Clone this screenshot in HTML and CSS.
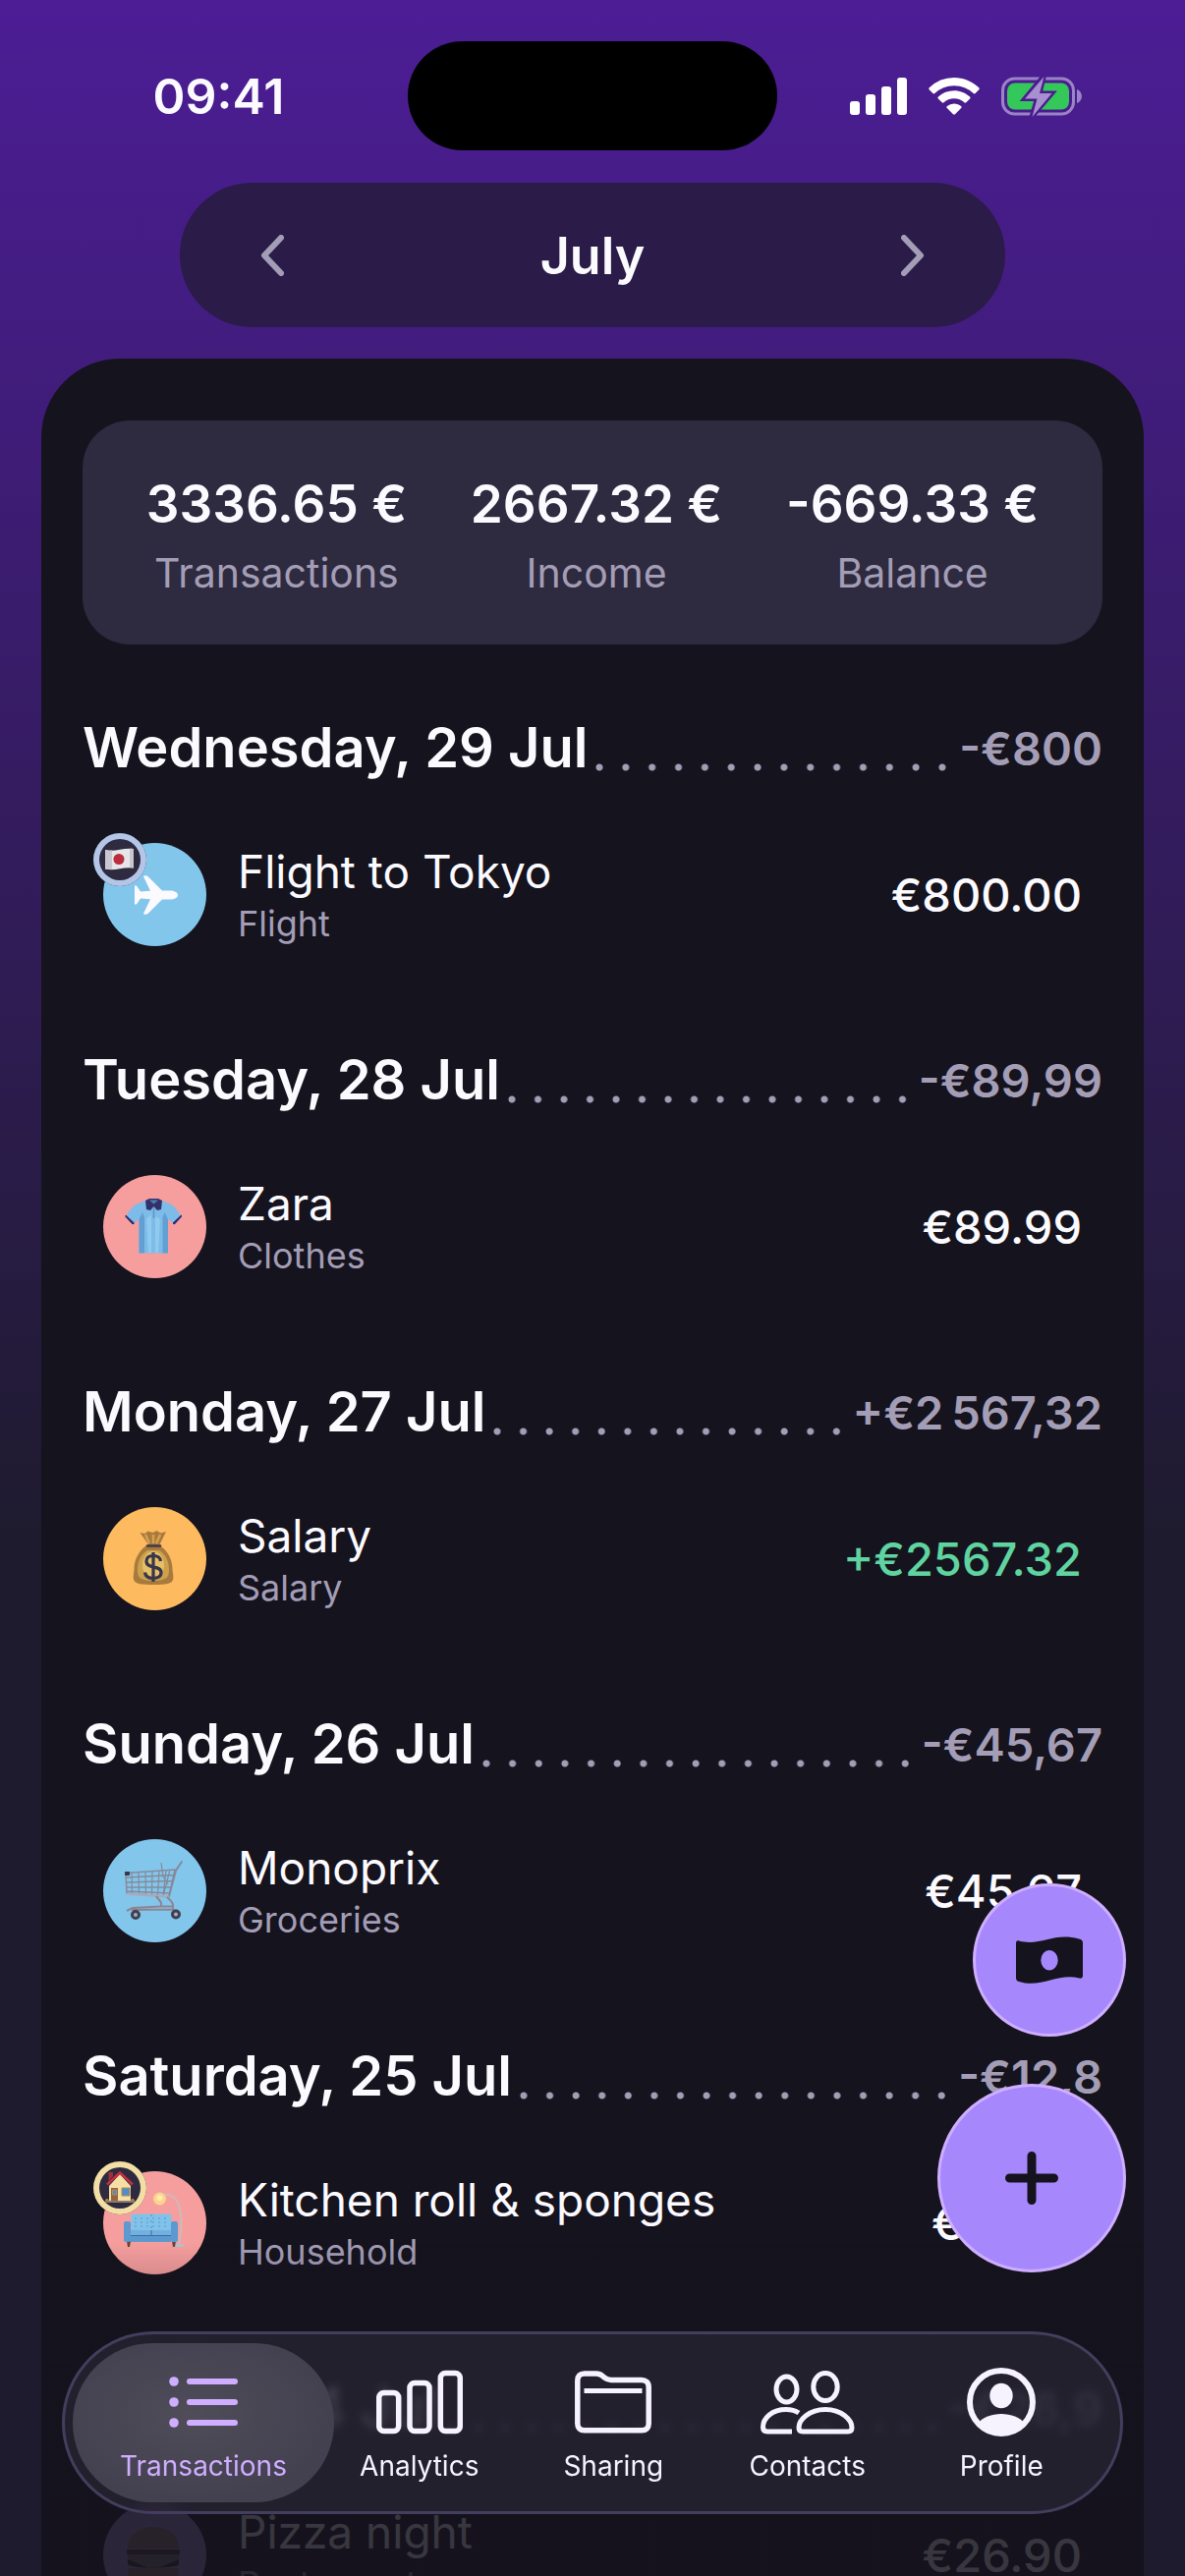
FILE: index.html
```html
<!DOCTYPE html>
<html lang="en">
<head>
    <meta charset="UTF-8">
    <meta name="viewport" content="width=device-width, initial-scale=1.0">
    <title>Transactions</title>
    <link rel="stylesheet" href="styles.css">
</head>
<body>
    <header class="status-bar">
        <span class="time">09:41</span>
        <span class="island"></span>
        <div class="status-icons">
            <svg width="58" height="38" viewBox="0 0 58 38" fill="#fff">
                <rect x="0" y="24" width="10" height="14" rx="3"/>
                <rect x="16" y="17" width="10" height="21" rx="3"/>
                <rect x="32" y="9" width="10" height="29" rx="3"/>
                <rect x="48" y="0" width="10" height="38" rx="3"/>
            </svg>
            <svg width="52" height="38" viewBox="0 0 52 38" fill="#fff">
                <path d="M26 0c9.500 0 18.500 3.700 25.300 10.300.6.600.6 1.400 0 2l-3.700 3.800c-.6.600-1.300.6-1.900 0A28 28 0 0 0 26 8.200 28 28 0 0 0 6.300 16.100c-.6.600-1.300.6-1.900 0L.7 12.300c-.6-.6-.6-1.400 0-2A36.200 36.200 0 0 1 26 0z"/>
                <path d="M26 13.200c6.200 0 11.800 2.400 16.100 6.300.6.600.6 1.400 0 2l-3.800 3.800c-.5.500-1.300.5-1.900 0A15.300 15.300 0 0 0 26 21.300c-4 0-7.600 1.500-10.400 4-.6.500-1.400.5-1.900 0l-3.800-3.800c-.6-.6-.6-1.400 0-2A23.600 23.600 0 0 1 26 13.200z"/>
                <path d="M26 26.400c2.700 0 5.100.9 7.100 2.500.7.600.7 1.400.1 2l-6.200 6.300c-.6.600-1.400.6-2 0l-6.200-6.300c-.6-.6-.6-1.400.1-2a11.300 11.300 0 0 1 7.100-2.500z"/>
            </svg>
            <svg width="82" height="42" viewBox="0 0 82 42">
                <rect x="1.500" y="3" width="72" height="36" rx="12" fill="none" stroke="#9a83c6" stroke-width="3"/>
                <rect x="6" y="7.500" width="63" height="27" rx="8" fill="#34c759"/>
                <path d="M77 14v14c3-1 5-4 5-7s-2-6-5-7z" fill="#9a83c6"/>
                <path d="M43.500 0 24 23.500h12.500L31 42l20.500-24H39z" fill="#a78fd0" stroke="#4a1b8d" stroke-width="5"/>
                <path d="M43.500 1 24 23.500h12.500L31.500 42 51.500 18H39z" fill="#a78fd0"/>
            </svg>
        </div>
    </header>

    <div class="month-picker">
        <button class="arrow" aria-label="Previous month">
            <svg width="24" height="42" viewBox="0 0 24 42"><path d="M21 3 4 21l17 18"/></svg>
        </button>
        <h1>July</h1>
        <button class="arrow" aria-label="Next month">
            <svg width="24" height="42" viewBox="0 0 24 42"><path d="m3 3 17 18L3 39"/></svg>
        </button>
    </div>

    <main class="panel">
        <div class="summary">
            <div class="summary-item"><strong>3336.65 €</strong><span>Transactions</span></div>
            <div class="summary-item"><strong>2667.32 €</strong><span>Income</span></div>
            <div class="summary-item"><strong>-669.33 €</strong><span>Balance</span></div>
        </div>

        <section class="day">
            <div class="day-header">
                <h2>Wednesday, 29 Jul</h2>
                <span class="dots"></span>
                <span class="total">-€800</span>
            </div>
            <div class="transaction">
                <div class="category blue">
                    <svg width="105" height="105" viewBox="0 0 105 105">
                        <path d="M76 53c0-3-4-4.500-8-4.500h-8L46 34.500c-1-1-2.500-1.500-4-1.300-.8.200-1 .8-.7 1.500l6.700 14-10 .8-3.700-5.500c-.5-.8-2.300-1-2.300 0V62c0 1 1.800.8 2.300 0l3.700-5.500 10 .8-6.700 14c-.3.700-.1 1.300.7 1.500 1.500.2 3-.3 4-1.300l14-14h8c4 0 8-1.500 8-4.500z" fill="#fbfaff"/>
                    </svg>
                    <span class="badge">
                        <svg width="54" height="54" viewBox="0 0 54 54">
                            <path d="M12 17c10 2.500 18-2.500 29-1v19.500c-11-1.500-19 3.500-29 1z" fill="#e6e5ea"/>
                            <path d="M12 17c3 .8 5 .8 7 .6v19c-2 .4-4 .4-7-.1zM37 15.700l4 .3v19.500l-4-.3z" fill="#c9c8d0"/>
                            <circle cx="26" cy="26.500" r="5.500" fill="#bb2c3d"/>
                        </svg>
                    </span>
                </div>
                <div class="details">
                    <span class="name">Flight to Tokyo</span>
                    <span class="type">Flight</span>
                </div>
                <span class="amount">€800.00</span>
            </div>
        </section>

        <section class="day">
            <div class="day-header">
                <h2>Tuesday, 28 Jul</h2>
                <span class="dots"></span>
                <span class="total">-€89,99</span>
            </div>
            <div class="transaction">
                <div class="category pink">
                    <svg width="105" height="105" viewBox="0 0 105 105">
                        <path d="M43 26 34 29.500c-4 2-7.500 7-10.500 12L31 49l5.500-4v34.500h29.500V45l5.500 4 7.500-7.500c-3-5-6.500-10-10.500-12L60 26l-8.500 5z" fill="#7dbbe8"/>
                        <path d="M36.500 45v34.500H42V43l-2-5zM66 45v34.500h-5.500V43l2-5z" fill="#639fd3"/>
                        <path d="m44 45 2 34h3V40zM58 45l-2 34h-3V42z" fill="#91caef"/>
                        <path d="m23 41 8.500 8-1.500 1-7-7.500zM79.500 41 71 49l1.500 1 7-7.500z" fill="#2d2c6e" stroke="#2d2c6e" stroke-width="1"/>
                        <path d="m43 26 4-2h9l4 2-1 9-4 1-3.500-4-3.500 4-4-1z" fill="#33316d"/>
                        <path d="M47 25.500h9l-4.500 4z" fill="#4e80a8"/>
                        <path d="M51.500 33v11" stroke="#5f97c7" stroke-width="1.500"/>
                    </svg>
                </div>
                <div class="details">
                    <span class="name">Zara</span>
                    <span class="type">Clothes</span>
                </div>
                <span class="amount">€89.99</span>
            </div>
        </section>

        <section class="day">
            <div class="day-header">
                <h2>Monday, 27 Jul</h2>
                <span class="dots"></span>
                <span class="total">+€2&#8239;567,32</span>
            </div>
            <div class="transaction">
                <div class="category orange">
                    <svg width="105" height="105" viewBox="0 0 105 105">
                        <path d="M46 38 37.500 26l5 1 3-2.500 5 1.500 4-2 4 2.500 5.500-1.500L57 39c9 5 13.500 15 13.500 24 0 3 1.500 8 .5 11-1 4-7 5-19.500 5S33 78.500 31 74c-.8-3 .5-8 .5-11C31.500 53 37 43 46 38z" fill="#a87a3d"/>
                        <path d="M45 44c-7 4-10 12-10 20 0 7 2 11 16 11s16-4 16-11c0-8-3-16-10-20z" fill="#cda04c"/>
                        <ellipse cx="51" cy="59" rx="11" ry="14" fill="#e5be66"/>
                        <path d="m43 28 4 9m4-9v9m7-9-4 9" stroke="#d5a24c" stroke-width="2.500"/>
                        <path d="M45 39.500h13" stroke="#40394a" stroke-width="2.500" stroke-linecap="round"/>
                        <path d="M58.500 55c-.5-4-3.500-5.500-7.500-5.500-4.500 0-7 2.300-7 5.800 0 8.200 15 3.500 15 11.200 0 4-3.500 6-8 6s-8-2-8.500-6M51 46v30" fill="none" stroke="#37364b" stroke-width="3.200"/>
                    </svg>
                </div>
                <div class="details">
                    <span class="name">Salary</span>
                    <span class="type">Salary</span>
                </div>
                <span class="amount income">+€2567.32</span>
            </div>
        </section>

        <section class="day">
            <div class="day-header">
                <h2>Sunday, 26 Jul</h2>
                <span class="dots"></span>
                <span class="total">-€45,67</span>
            </div>
            <div class="transaction">
                <div class="category blue">
                    <svg width="105" height="105" viewBox="0 0 105 105" fill="none" stroke="#858a9b">
                        <path d="M23 34.500 73 31l-6 27.500L24 55zM23.500 39l48-2.500M23.500 44l47-1.500M24 49h45M24 53l44 2" stroke-width="1.500"/>
                        <path d="m29 34 .5 21M36 33.500l.5 22M43 33l.5 23M50 32.500l-.5 24M57 32l-1.500 25M64 31.500 61 58M59 24l2 14 5 8M68 31l-7 27" stroke-width="1.200"/>
                        <path d="m67 58 7-26 6-9" stroke-width="2" stroke-linecap="round"/>
                        <path d="M24 55.500 67 58.500" stroke="#a7aab8" stroke-width="2.500"/>
                        <path d="M54 58c2 4 6 4 5 10M65 59c3 3 7 5 6 10M24 73l6-3 28-1.500h13v3L30 72l3 4M71 71l3 4" stroke="#8d8592" stroke-width="2"/>
                        <circle cx="33" cy="77" r="3.500" fill="#aab" stroke="#3d4053" stroke-width="3"/>
                        <circle cx="74" cy="76.500" r="3.500" fill="#aab" stroke="#3d4053" stroke-width="3"/>
                        <path d="M22.500 33.500h4v3h-4z" fill="#33384a" stroke="#33384a"/>
                    </svg>
                </div>
                <div class="details">
                    <span class="name">Monoprix</span>
                    <span class="type">Groceries</span>
                </div>
                <span class="amount">€45.67</span>
            </div>
        </section>

        <section class="day">
            <div class="day-header">
                <h2>Saturday, 25 Jul</h2>
                <span class="dots"></span>
                <span class="total">-€12,8</span>
            </div>
            <div class="transaction">
                <div class="category pink">
                    <svg width="105" height="105" viewBox="0 0 105 105">
                        <path d="M61 24c10-2 15 6 17 14 3 14 1 26-1 37" fill="none" stroke="#c9bdbb" stroke-width="1.800"/>
                        <path d="M73 75.500h8" stroke="#b9c0cc" stroke-width="3" stroke-linecap="round"/>
                        <circle cx="57.500" cy="28" r="6.500" fill="#fbd48b"/>
                        <circle cx="57.500" cy="27" r="3" fill="#fdeab5"/>
                        <path d="m24 71 1 6h2l1-6M70 71l1 6h2l1-6" fill="#5d473f"/>
                        <rect x="28.500" y="43.500" width="41" height="18" rx="2" fill="#80c2ea"/>
                        <path d="M49 44v17M32 48h35M32 52h35M32 56h35" stroke="#5c98c8" stroke-width="1.200" stroke-dasharray="2 4"/>
                        <rect x="26" y="60" width="46" height="6" fill="#74b0df"/>
                        <rect x="21" y="51" width="7" height="21" rx="2" fill="#5d99d1"/>
                        <rect x="69" y="51" width="7" height="21" rx="2" fill="#5d99d1"/>
                        <rect x="28" y="65.500" width="41" height="6.500" fill="#5d99d1"/>
                        <path d="M28 65.500h41M49 60v5" stroke="#386f9f"/>
                    </svg>
                    <span class="badge home">
                        <svg width="54" height="54" viewBox="0 0 54 54">
                            <path d="M16 25 27 13l11 12v16H16z" fill="#f6dfa4"/>
                            <path d="M15.500 11H20v4l-4.500 5z" fill="#9f2f3c"/>
                            <path d="m14 23.500 13-12 13 12" fill="none" stroke="#c4303f" stroke-width="2.500" stroke-linejoin="round"/>
                            <path d="M18 27h7v14h-7z" fill="#97663d"/>
                            <path d="M19.500 29h4v5h-4zM29 27h8v8h-8z" fill="#4f8fc8" stroke="#b98a50" stroke-width="1"/>
                            <path d="M12 41h30" stroke="#8d7b6b" stroke-width="2"/>
                            <path d="M12 40c1-3 3-3 4 0zM38 40c1-3 3-3 4 0z" fill="#b77f3c"/>
                        </svg>
                    </span>
                </div>
                <div class="details">
                    <span class="name">Kitchen roll &amp; sponges</span>
                    <span class="type">Household</span>
                </div>
                <span class="amount">€12.80</span>
            </div>
        </section>

        <section class="day">
            <div class="day-header">
                <h2>Friday, 24 Jul</h2>
                <span class="dots"></span>
                <span class="total">-€26,9</span>
            </div>
            <div class="transaction">
                <div class="category purple">
                    <svg width="105" height="105" viewBox="0 0 105 105">
                        <path d="M25 46c0-13 10-22 26-22s26 9 26 22z" fill="#8a7a6c"/>
                        <path d="M24 47h54v5H24z" fill="#3f3a38"/>
                        <path d="M25 52h52v5L51 68 25 57z" fill="#7c7470"/>
                        <path d="M25 57l26 11 26-11v5c-2 5-50 5-52 0z" fill="#332b2b"/>
                        <path d="M25 66h52c0 9-3 14-9 14H34c-6 0-9-5-9-14z" fill="#8a7a6c"/>
                    </svg>
                </div>
                <div class="details">
                    <span class="name">Pizza night</span>
                    <span class="type">Restaurant</span>
                </div>
                <span class="amount">€26.90</span>
            </div>
        </section>
    </main>

    <div class="fade"></div>

    <div class="actions">
        <button class="action small" aria-label="Budget">
            <svg width="68" height="48" viewBox="0 0 68 48">
                <path fill-rule="evenodd" d="M0 7c0-2 1-3 3-2.500 22 6 35-9 61-2 2.500.7 4 1.500 4 4V40c0 2-1.500 3-3.500 2.500C42 37 26 53 3 46c-2-.7-3-1.500-3-4zm34 7a8.500 10 0 1 0 0 20.500A8.500 10 0 1 0 34 14z" fill="#15131d"/>
            </svg>
        </button>
        <button class="action big" aria-label="Add transaction">
            <svg width="54" height="54" viewBox="0 0 54 54">
                <path d="M27 4.500v45M4.500 27h45" stroke="#15131d" stroke-width="9" stroke-linecap="round"/>
            </svg>
        </button>
    </div>

    <nav class="tab-bar">
        <a href="#" class="tab active">
            <svg width="70" height="70" viewBox="0 0 70 70" fill="#cfaeff">
                <circle cx="5" cy="14" r="4.800"/><rect x="18" y="11" width="52" height="6" rx="3"/>
                <circle cx="5" cy="35" r="4.800"/><rect x="18" y="32" width="52" height="6" rx="3"/>
                <circle cx="5" cy="56" r="4.800"/><rect x="18" y="53" width="52" height="6" rx="3"/>
            </svg>
            Transactions
        </a>
        <a href="#" class="tab">
            <svg width="88" height="70" viewBox="0 0 88 70" fill="none" stroke="#f6f3ff" stroke-width="5.500">
                <rect x="2.700" y="25.500" width="20" height="39" rx="5"/>
                <rect x="34" y="15.500" width="20" height="49" rx="5"/>
                <rect x="65.300" y="5.500" width="20" height="59" rx="5"/>
            </svg>
            Analytics
        </a>
        <a href="#" class="tab">
            <svg width="78" height="70" viewBox="0 0 78 70" fill="none" stroke="#f6f3ff" stroke-width="5.500" stroke-linejoin="round">
                <path d="M2.800 13c0-4.500 2.500-7 7-7h12c3 0 4.500.7 6.500 2.500l2 1.700c2 1.600 3.500 2.300 6.500 2.300h31c4.500 0 7.400 2.500 7.400 7V57c0 4.300-2.500 6.700-7 6.700H9.800c-4.500 0-7-2.400-7-6.700z"/>
                <path d="M9.500 23.500h59" stroke-width="5"/>
            </svg>
            Sharing
        </a>
        <a href="#" class="tab">
            <svg width="96" height="70" viewBox="0 0 96 70" fill="none" stroke="#f6f3ff" stroke-width="5">
                <ellipse cx="26.500" cy="22" rx="10.500" ry="13"/>
                <ellipse cx="66" cy="19.500" rx="12.200" ry="14"/>
                <path d="M32 65H7c-3 0-4.500-1.500-4.500-4.500C2.500 51 12 42.500 26 42.500c5 0 9.500 1.200 13 3.500"/>
                <path d="M66 42.500c16.500 0 27 10.500 27 18.500 0 2.500-1.500 4-4 4H43c-2.500 0-4-1.500-4-4 0-8 10.500-18.500 27-18.500z"/>
            </svg>
            Contacts
        </a>
        <a href="#" class="tab">
            <svg width="70" height="70" viewBox="0 0 70 70">
                <circle cx="35" cy="35" r="32" fill="none" stroke="#f6f3ff" stroke-width="6"/>
                <ellipse cx="35" cy="28.500" rx="11.700" ry="12.800" fill="#f6f3ff"/>
                <path d="M12 56c4-5.500 13-9 23-9s19 3.500 23 9c-6 8-14 11.500-23 11.500S18 64 12 56z" fill="#f6f3ff"/>
            </svg>
            Profile
        </a>
    </nav>
</body>
</html>
```

FILE: styles.css
```css
* {
    box-sizing: border-box;
    margin: 0;
}
body {
    height: 100vh;
    overflow: hidden;
    font-family: Inter, "Liberation Sans", sans-serif;
    color: #fbfaff;
    background: linear-gradient(#4c1d95, #1e1b2e 60%);
}
svg {
    display: block;
}
button {
    border: none;
    cursor: pointer;
}

/* status bar */
.status-bar {
    display: grid;
    grid-template-columns: 1fr auto 1fr;
    align-items: center;
    padding: 42px 0 33px;
}
.time {
    padding: 0 24px 0 54px;
    text-align: center;
    font-size: 50px;
    font-weight: 600;
}
.island {
    width: 376px;
    height: 111px;
    border-radius: 56px;
    background: #000;
}
.status-icons {
    display: flex;
    align-items: center;
    gap: 22px;
    padding-left: 74px;
}

/* month */
.month-picker {
    display: flex;
    align-items: center;
    justify-content: space-between;
    max-width: 840px;
    height: 147px;
    margin: 0 auto;
    padding: 0 60px;
    border-radius: 74px;
    background: #2b1b48;
}
.month-picker h1 {
    padding-top: 2px;
    font-size: 52px;
    font-weight: 600;
}
.arrow {
    padding: 20px 22px;
    background: none;
}
.arrow path {
    fill: none;
    stroke: #a39db6;
    stroke-width: 6;
    stroke-linecap: round;
    stroke-linejoin: round;
}

/* list */
.panel {
    margin: 32px 42px 0;
    padding: 63px 42px;
    border-radius: 80px 80px 0 0;
    background: #15131d;
}
.summary {
    display: flex;
    justify-content: space-evenly;
    padding: 53px 0 49px;
    border-radius: 48px;
    background: #2e2a3f;
}
.summary-item {
    display: flex;
    flex-direction: column;
    align-items: center;
}
.summary-item strong {
    font-size: 53px;
    line-height: 64px;
    font-weight: 600;
}
.summary-item span {
    margin-top: 14px;
    font-size: 41px;
    line-height: 48px;
    color: #a39db6;
}
.day {
    padding-top: 70px;
}
.day-header {
    display: flex;
    align-items: center;
    height: 70px;
}
.day-header h2 {
    font-size: 56px;
    font-weight: 600;
}
.dots {
    flex: 1;
    height: 54px;
    margin-left: 2px;
    background: radial-gradient(circle at 10px 47px, #a39db6 3px, transparent 4px) 0 0 / 27px 100% round;
}
.total {
    font-size: 47px;
    font-weight: 600;
    color: #a39db6;
}
.transaction {
    display: flex;
    align-items: center;
    height: 105px;
    margin: 62px 21px 31px;
}
.category {
    position: relative;
    width: 105px;
    height: 105px;
    border-radius: 50%;
}
.blue {
    background: #83c6ec;
}
.pink {
    background: #f69e9e;
}
.orange {
    background: #fdba5f;
}
.purple {
    background: #a78bda;
}
.badge {
    position: absolute;
    top: -10px;
    left: -10px;
    border-radius: 50%;
    background: #2e2a3f;
    box-shadow: inset 0 0 0 6px #b3c6e8;
}
.badge.home {
    box-shadow: inset 0 0 0 6px #f3dea5;
}
.details {
    flex: 1;
    display: flex;
    flex-direction: column;
    padding-left: 32px;
}
.name {
    font-size: 46px;
    line-height: 58px;
}
.type {
    font-size: 36px;
    line-height: 48px;
    color: #a39db6;
}
.amount {
    font-size: 47px;
    font-weight: 500;
}
.income {
    color: #5fd3a0;
}

/* floating parts */
.fade {
    position: fixed;
    left: 42px;
    right: 42px;
    bottom: 0;
    height: 340px;
    background: linear-gradient(rgba(21, 19, 29, 0), rgba(21, 19, 29, 0.65) 50%, rgba(21, 19, 29, 0.85) 75%);
}
.actions {
    position: fixed;
    right: 60px;
    bottom: 309px;
    display: flex;
    flex-direction: column;
    align-items: flex-end;
    gap: 48px;
}
.action {
    display: flex;
    align-items: center;
    justify-content: center;
    padding: 0;
    border: 3px solid #cfaeff;
    border-radius: 50%;
    background: #a688fc;
}
.small {
    width: 156px;
    height: 156px;
}
.big {
    width: 192px;
    height: 192px;
}
.tab-bar {
    position: fixed;
    left: 63px;
    right: 63px;
    bottom: 63px;
    display: flex;
    height: 186px;
    padding: 9px 22px 9px 8px;
    border: 3px solid #443e5e;
    border-radius: 93px;
    background: rgba(41, 38, 54, 0.7);
    backdrop-filter: blur(4px);
}
.tab {
    flex: 1;
    display: flex;
    flex-direction: column;
    align-items: center;
    padding-top: 25px;
    border-radius: 81px;
    font-size: 28px;
    line-height: 32px;
    color: #f6f3ff;
    text-decoration: none;
}
.tab svg {
    margin-bottom: 14px;
}
.tab.active {
    flex: 0 0 266px;
    margin-right: -12px;
    color: #cfaeff;
    background: radial-gradient(ellipse at 45% 45%, #504d59, #434050 70%);
}
```
